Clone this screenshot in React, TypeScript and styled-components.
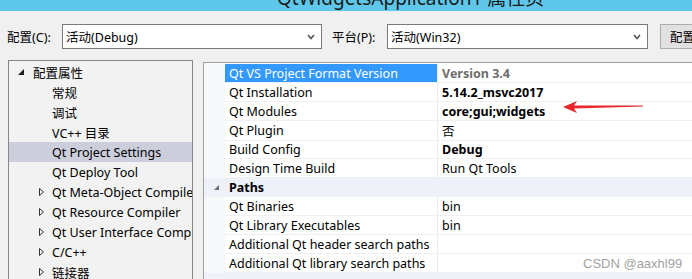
import styled, { createGlobalStyle } from 'styled-components';

const FONT = `"Microsoft YaHei", "Noto Sans", "Noto Sans CJK SC", sans-serif`;

const GlobalStyle = createGlobalStyle`
  html, body {
    margin: 0;
    padding: 0;
    overflow: hidden;
    background: #f0f0f0;
    font-family: ${FONT};
  }
`;

const Page = styled.div`
  position: relative;
  width: 692px;
  height: 279px;
  overflow: hidden;
  background: #f0f0f0;
  color: #000;
`;

const TitleBar = styled.div`
  height: 11px;
  background: #5fc7ea;
  overflow: hidden;
  padding-left: 277px;
`;

const TitleText = styled.div`
  font-size: 19px;
  line-height: 20px;
  margin-top: -12px;
  color: #1a1a1a;
  white-space: nowrap;
`;

const Toolbar = styled.div`
  display: flex;
  align-items: center;
  margin-top: 13px;
  height: 25px;
  font-size: 12.5px;
`;

const Label = styled.span<{ $left: number; $width: number }>`
  flex-shrink: 0;
  margin-left: ${(p) => p.$left}px;
  width: ${(p) => p.$width}px;
  white-space: nowrap;
`;

const Combo = styled.div<{ $width: number }>`
  box-sizing: border-box;
  flex-shrink: 0;
  width: ${(p) => p.$width}px;
  height: 25px;
  border: 1px solid #7a7a7a;
  background: #fff;
  display: flex;
  align-items: center;
  justify-content: space-between;
  padding: 0 6px 0 3px;
  white-space: nowrap;
`;

const Button = styled.div`
  box-sizing: border-box;
  margin-left: 12px;
  height: 25px;
  width: 110px;
  flex-shrink: 0;
  border: 1px solid #adadad;
  background: #e1e1e1;
  display: flex;
  align-items: center;
  padding-left: 9px;
  white-space: nowrap;
`;

const Main = styled.div`
  display: flex;
  align-items: flex-start;
  margin-top: 11px;
  padding-left: 8px;
`;

const Tree = styled.div`
  box-sizing: border-box;
  width: 185px;
  height: 240px;
  flex-shrink: 0;
  border: 1px solid #828790;
  background: #f2f2f2;
  padding-top: 1px;
  font-size: 12.5px;
  overflow: hidden;
`;

const TreeRow = styled.div<{ $level: number; $selected?: boolean }>`
  height: 20px;
  display: flex;
  align-items: center;
  padding-left: ${(p) => (p.$level === 0 ? 9 : 30)}px;
  background: ${(p) => (p.$selected ? '#cccedb' : 'transparent')};
  white-space: nowrap;
`;

const Toggle = styled.span<{ $level: number }>`
  display: inline-flex;
  align-items: center;
  width: ${(p) => (p.$level === 0 ? 15 : 13)}px;
  flex-shrink: 0;
`;

const Grid = styled.div`
  box-sizing: border-box;
  flex: 1;
  margin-left: 10px;
  margin-right: -30px;
  margin-top: 2px;
  height: 240px;
  border: 1px solid #a0a0a0;
  background: #fff;
  padding-top: 1px;
  font-size: 12.5px;
`;

const GridRow = styled.div<{ $category?: boolean }>`
  display: grid;
  grid-template-columns: 21px 213px 1fr;
  height: 19px;
  background: ${(p) => (p.$category ? '#eef2f8' : '#fff')};
`;

const Margin = styled.div`
  display: flex;
  align-items: center;
  justify-content: center;
  background: #f7f8fa;
`;

const CatMargin = styled(Margin)`
  background: transparent;
  padding-left: 4px;
`;

const NameCell = styled.div<{ $selected?: boolean }>`
  box-sizing: border-box;
  display: flex;
  align-items: center;
  padding-left: 4px;
  border-bottom: 1px solid #f0f0f0;
  border-right: 1px solid #ebebeb;
  background: ${(p) => (p.$selected ? '#3399ff' : 'transparent')};
  color: ${(p) => (p.$selected ? '#fff' : '#000')};
  white-space: nowrap;
  overflow: hidden;
`;

const ValueCell = styled.div<{ $bold?: boolean; $muted?: boolean }>`
  box-sizing: border-box;
  display: flex;
  align-items: center;
  padding-left: 4px;
  border-bottom: 1px solid #f0f0f0;
  font-weight: ${(p) => (p.$bold ? 700 : 400)};
  color: ${(p) => (p.$muted ? '#6d6d6d' : '#000')};
  white-space: nowrap;
`;

const CatName = styled.div`
  grid-column: 2 / 4;
  display: flex;
  align-items: center;
  padding-left: 4px;
  font-weight: 700;
`;

const Arrow = styled.svg`
  position: absolute;
  left: 560px;
  top: 99px;
`;

const Watermark = styled.div`
  position: absolute;
  left: 583px;
  top: 256px;
  font-family: "Liberation Sans", sans-serif;
  font-size: 13px;
  color: #a3a3a3;
  text-shadow: 0 0 1px #fff;
`;

const Chevron = () => (
  <svg width="8" height="6" viewBox="0 0 8 6">
    <path d="M1 1 L4 4.5 L7 1" fill="none" stroke="#555" strokeWidth="1.6" />
  </svg>
);

const Expanded = ({ color = '#1e1e1e', size = 6 }: { color?: string; size?: number }) => (
  <svg width={size} height={size} viewBox="0 0 6 6">
    <polygon points="6,0 6,6 0,6" fill={color} />
  </svg>
);

const Collapsed = () => (
  <svg width="5" height="8" viewBox="0 0 5 8">
    <polygon points="0.5,0.5 4.5,4 0.5,7.5" fill="none" stroke="#333" strokeWidth="1" />
  </svg>
);

type TreeItem = { label: string; level: number; kind?: 'open' | 'closed'; selected?: boolean };

const treeItems: TreeItem[] = [
  { label: '配置属性', level: 0, kind: 'open' },
  { label: '常规', level: 1 },
  { label: '调试', level: 1 },
  { label: 'VC++ 目录', level: 1 },
  { label: 'Qt Project Settings', level: 1, selected: true },
  { label: 'Qt Deploy Tool', level: 1 },
  { label: 'Qt Meta-Object Compiler', level: 1, kind: 'closed' },
  { label: 'Qt Resource Compiler', level: 1, kind: 'closed' },
  { label: 'Qt User Interface Compiler', level: 1, kind: 'closed' },
  { label: 'C/C++', level: 1, kind: 'closed' },
  { label: '链接器', level: 1, kind: 'closed' },
];

type Prop = { name: string; value?: string; bold?: boolean; muted?: boolean; selected?: boolean; category?: boolean };

const props: Prop[] = [
  { name: 'Qt VS Project Format Version', value: 'Version 3.4', bold: true, muted: true, selected: true },
  { name: 'Qt Installation', value: '5.14.2_msvc2017', bold: true },
  { name: 'Qt Modules', value: 'core;gui;widgets', bold: true },
  { name: 'Qt Plugin', value: '否' },
  { name: 'Build Config', value: 'Debug', bold: true },
  { name: 'Design Time Build', value: 'Run Qt Tools' },
  { name: 'Paths', category: true },
  { name: 'Qt Binaries', value: 'bin' },
  { name: 'Qt Library Executables', value: 'bin' },
  { name: 'Additional Qt header search paths', value: '' },
  { name: 'Additional Qt library search paths', value: '' },
  { name: '', category: true },
];

export default function App() {
  return (
    <Page>
      <GlobalStyle />
      <TitleBar>
        <TitleText>QtWidgetsApplication1 属性页</TitleText>
      </TitleBar>
      <Toolbar>
        <Label $left={7} $width={55}>配置(C):</Label>
        <Combo $width={260}>
          <span>活动(Debug)</span>
          <Chevron />
        </Combo>
        <Label $left={10} $width={55}>平台(P):</Label>
        <Combo $width={261}>
          <span>活动(Win32)</span>
          <Chevron />
        </Combo>
        <Button>配置管理器(O)...</Button>
      </Toolbar>
      <Main>
        <Tree>
          {treeItems.map((t) => (
            <TreeRow key={t.label} $level={t.level} $selected={t.selected}>
              <Toggle $level={t.level}>
                {t.kind === 'open' && <Expanded />}
                {t.kind === 'closed' && <Collapsed />}
              </Toggle>
              {t.label}
            </TreeRow>
          ))}
        </Tree>
        <Grid>
          {props.map((p, i) =>
            p.category ? (
              <GridRow key={i} $category>
                <CatMargin>
                  <Expanded color="#707070" size={5} />
                </CatMargin>
                <CatName>{p.name}</CatName>
              </GridRow>
            ) : (
              <GridRow key={i}>
                <Margin />
                <NameCell $selected={p.selected}>{p.name}</NameCell>
                <ValueCell $bold={p.bold} $muted={p.muted}>
                  {p.value}
                </ValueCell>
              </GridRow>
            )
          )}
        </Grid>
      </Main>
      <Arrow width="86" height="16" viewBox="0 0 86 16">
        <polygon
          points="3,8 17,2 14,6.6 83,6.6 83,7.6 14,9.6 17,14"
          fill="#e8262a"
        />
      </Arrow>
      <Watermark>CSDN @aaxhl99</Watermark>
    </Page>
  );
}
